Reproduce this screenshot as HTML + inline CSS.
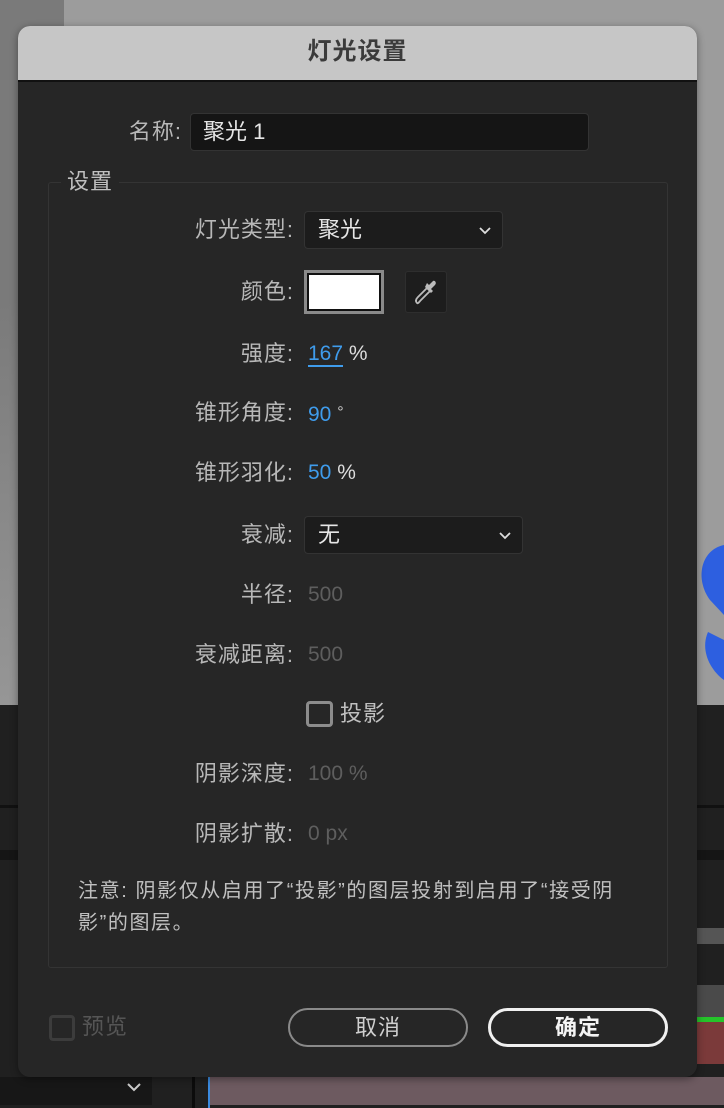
<!DOCTYPE html>
<html><head><meta charset="utf-8"><style>
*{margin:0;padding:0;box-sizing:border-box}
body{width:724px;height:1108px;overflow:hidden;background:#1e1e1e;position:relative;font-family:"Liberation Sans","Noto Sans CJK SC",sans-serif}
.a{position:absolute}
.lbl{position:absolute;right:430px;color:#b8b8b8;font-size:22px;letter-spacing:1px;line-height:26px;white-space:nowrap}
.val{position:absolute;left:308px;font-size:21px;line-height:26px;white-space:nowrap}
.blue{color:#3f9cec}
.dim{color:#5e5e5e}
.sel{position:absolute;background:#1c1c1c;border:1px solid #333;border-radius:4px;color:#e6e6e6;font-size:22px;line-height:36px;padding-left:13px}
.chev{position:absolute;right:10px;top:11px;width:14px;height:14px}
</style></head><body>
<div class="a" style="left:0;top:0;width:724px;height:705px;background:#9c9c9c"></div>
<div class="a" style="left:0;top:0;width:64px;height:300px;background:#7a7a7a"></div>
<div class="a" style="left:0;top:300px;width:20px;height:405px;background:linear-gradient(#7a7a7a,#969696)"></div>
<svg class="a" style="left:690px;top:540px" width="34" height="150"><path d="M34 5 C10 10 5 40 20 60 L34 75 Z" fill="#2d5fe0"/><path d="M34 100 L18 92 C10 110 20 130 34 140 Z" fill="#2d5fe0"/></svg>
<div class="a" style="left:0;top:705px;width:724px;height:403px;background:#202020"></div>
<div class="a" style="left:0;top:805px;width:724px;height:3px;background:#111"></div>
<div class="a" style="left:0;top:850px;width:724px;height:10px;background:#151515"></div>
<div class="a" style="left:697px;top:928px;width:27px;height:16px;background:#555"></div>
<div class="a" style="left:697px;top:985px;width:27px;height:32px;background:#4a4a4a"></div>
<div class="a" style="left:697px;top:1017px;width:27px;height:5px;background:#25c42a"></div>
<div class="a" style="left:697px;top:1022px;width:27px;height:42px;background:#7b3a3a"></div>
<div class="a" style="left:210px;top:1077px;width:514px;height:28px;background:#6d5a60"></div>
<div class="a" style="left:208px;top:1077px;width:2px;height:31px;background:#3b8be0"></div>
<div class="a" style="left:192px;top:1077px;width:3px;height:31px;background:#0c0c0c"></div>
<div class="a" style="left:0;top:1077px;width:152px;height:28px;background:#171717"></div>
<svg class="a" style="left:126px;top:1081px" width="16" height="12"><path d="M2 3 L8 9 L14 3" stroke="#ccc" stroke-width="2" fill="none"/></svg>
<div class="a" style="left:18px;top:26px;width:679px;height:1051px;background:#262626;border-radius:12px;overflow:hidden;box-shadow:0 2px 8px rgba(0,0,0,.4)">
  <div class="a" style="left:0;top:0;width:679px;height:56px;background:#c6c6c6;border-bottom:2px solid #111"></div>
  <div class="a" style="left:0;top:11px;width:679px;text-align:center;font-size:24px;font-weight:bold;color:#3b3b3b;line-height:30px;letter-spacing:1px">灯光设置</div>
</div>
<div class="lbl" style="top:119px;right:542px">名称:</div>
<div class="a" style="left:190px;top:113px;width:399px;height:38px;background:#151515;border:1px solid #333;border-radius:4px;color:#e6e6e6;font-size:22px;line-height:36px;padding-left:12px">聚光 1</div>
<div class="a" style="left:48px;top:182px;width:620px;height:786px;border:1px solid #343434;border-radius:3px"></div>
<div class="a" style="left:61px;top:169px;padding:0 6px;background:#262626;color:#c0c0c0;font-size:22px;line-height:26px;letter-spacing:1px">设置</div>

<div class="lbl" style="top:217px">灯光类型:</div>
<div class="sel" style="left:304px;top:211px;width:199px;height:38px">聚光<svg class="chev" viewBox="0 0 14 14"><path d="M2 5 L7 10 L12 5" stroke="#ddd" stroke-width="1.8" fill="none"/></svg></div>

<div class="lbl" style="top:279px">颜色:</div>
<div class="a" style="left:304px;top:270px;width:80px;height:44px;border:3px solid #8a8a8a;background:#111;padding:2px"><div style="width:100%;height:100%;background:#fff"></div></div>
<div class="a" style="left:405px;top:271px;width:42px;height:42px;background:#1d1d1d;border-radius:3px;border:1px solid #2e2e2e"></div>
<svg class="a" style="left:409px;top:275px" width="34" height="34" viewBox="0 0 34 34"><path d="M8 28 C6 26 7 24 9 22 L18 13 L21 16 L12 25 C10 27 9 29 8 28 Z" fill="none" stroke="#bbb" stroke-width="1.8"/><path d="M16 12 L22 18 L24 16 L22 14 L26 10 C28 8 26 5 24 6 L20 10 L18 8 Z" fill="#bbb"/></svg>

<div class="lbl" style="top:341px">强度:</div>
<div class="val" style="top:341px"><span class="blue" style="border-bottom:2px solid #3f9cec">167</span> <span style="color:#ddd">%</span></div>

<div class="lbl" style="top:400px">锥形角度:</div>
<div class="val" style="top:400px"><span class="blue">90</span> <span style="color:#ccc;font-size:16px;vertical-align:4px">°</span></div>

<div class="lbl" style="top:460px">锥形羽化:</div>
<div class="val" style="top:460px"><span class="blue">50</span> <span style="color:#ddd">%</span></div>

<div class="lbl" style="top:522px">衰减:</div>
<div class="sel" style="left:304px;top:516px;width:219px;height:38px">无<svg class="chev" viewBox="0 0 14 14"><path d="M2 5 L7 10 L12 5" stroke="#ddd" stroke-width="1.8" fill="none"/></svg></div>

<div class="lbl" style="top:582px">半径:</div>
<div class="val dim" style="top:582px">500</div>
<div class="lbl" style="top:642px">衰减距离:</div>
<div class="val dim" style="top:642px">500</div>

<div class="a" style="left:306px;top:701px;width:27px;height:26px;border:3px solid #8c8c8c;border-radius:4px"></div>
<div class="a" style="left:340px;top:701px;color:#c0c0c0;font-size:22px;line-height:26px;letter-spacing:1px">投影</div>

<div class="lbl" style="top:761px">阴影深度:</div>
<div class="val dim" style="top:761px">100 %</div>
<div class="lbl" style="top:821px">阴影扩散:</div>
<div class="val dim" style="top:821px">0 px</div>

<div class="a" style="left:78px;top:875px;width:580px;color:#c0c0c0;font-size:20px;line-height:32px;letter-spacing:1.6px;white-space:nowrap">注意: 阴影仅从启用了“投影”的图层投射到启用了“接受阴<br>影”的图层。</div>

<div class="a" style="left:49px;top:1015px;width:26px;height:26px;border:3px solid #3c3c3c;border-radius:4px"></div>
<div class="a" style="left:82px;top:1014px;color:#555;font-size:22px;line-height:26px;letter-spacing:1px">预览</div>
<div class="a" style="left:288px;top:1008px;width:180px;height:39px;border:2px solid #8a8a8a;border-radius:20px;text-align:center;color:#cfcfcf;font-size:22px;line-height:35px;letter-spacing:1px">取消</div>
<div class="a" style="left:488px;top:1008px;width:180px;height:39px;border:3px solid #f0f0f0;border-radius:20px;text-align:center;color:#f4f4f4;font-size:22px;font-weight:bold;line-height:33px;letter-spacing:1px">确定</div>
</body></html>
